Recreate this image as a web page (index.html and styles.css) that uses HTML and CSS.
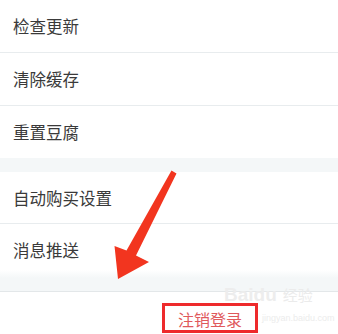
FILE: index.html
```html
<!DOCTYPE html>
<html lang="zh-CN">
<head>
<meta charset="utf-8">
<title>设置</title>
<link rel="stylesheet" href="styles.css">
</head>
<body>
<div class="page">
  <div class="group">
    <div class="row row-first">检查更新</div>
    <div class="row row-mid">清除缓存</div>
    <div class="row row-last">重置豆腐</div>
  </div>
  <div class="gap"></div>
  <div class="group">
    <div class="row row-first row-short">自动购买设置</div>
    <div class="row row-push">消息推送</div>
  </div>
  <div class="footer">
    <span class="logout">注销登录</span>
    <div class="watermark">
      <div class="wm-line"><span class="wm-brand">Baidu</span><span class="wm-cn">经验</span></div>
    </div>
    <div class="wm-url">jingyan.baidu.com</div>
  </div>
  <svg class="arrow" width="338" height="334" viewBox="0 0 338 334">
    <polygon fill="#f2351f" points="171.5,170.5 176.5,173.5 136,255.5 149,262 118,279 114.5,246 126.5,250.5"/>
  </svg>
</div>
</body>
</html>
```
FILE: styles.css
```css
html, body {
  margin: 0;
  padding: 0;
  background: #ffffff;
}
.page {
  position: relative;
  width: 338px;
  height: 334px;
  overflow: hidden;
  font-family: "Noto Sans CJK SC", "Noto Sans", sans-serif;
}
.group {
  display: flex;
  flex-direction: column;
  background: #ffffff;
}
.row {
  display: flex;
  align-items: center;
  padding-left: 13px;
  font-size: 16.5px;
  color: #3a3a3a;
  height: 52px;
  box-sizing: border-box;
}
.row-first {
  height: 53px;
  border-bottom: 1px solid #e8ecee;
}
.row-mid {
  height: 53px;
  border-bottom: 1px solid #e8ecee;
}
.row-last {
  height: 52px;
}
.row-short {
  height: 52px;
}
.gap {
  height: 14px;
  background: #f4f7f8;
}
.row-push {
  height: 68px;
  padding-bottom: 16px;
  border-bottom: 1px solid #e3e7e9;
  background: linear-gradient(to bottom, #ffffff 0, #ffffff 46px, #f4f7f8 54px, #f4f7f8 100%);
}
.footer {
  position: relative;
  display: flex;
  padding-top: 11px;
  padding-left: 162px;
}
.logout {
  display: inline-block;
  border: 3px solid #ee2a2c;
  padding: 3px 13px 1px 13px;
  line-height: 20px;
  font-size: 16px;
  color: #e0595c;
}
.watermark {
  position: absolute;
  left: 224px;
  top: -5px;
  line-height: 1;
}
.wm-line {
  display: flex;
  align-items: flex-end;
  gap: 6px;
}
.wm-brand {
  font-family: "Liberation Sans", sans-serif;
  font-weight: bold;
  font-size: 19px;
  line-height: 16px;
  color: #ededed;
}
.wm-cn {
  font-size: 15px;
  line-height: 16px;
  color: #ebebeb;
}
.wm-url {
  position: absolute;
  left: 262px;
  top: 21px;
  font-family: "Liberation Sans", sans-serif;
  font-size: 9px;
  line-height: 10px;
  color: #ececec;
}
.arrow {
  position: absolute;
  left: 0;
  top: 0;
  pointer-events: none;
}
```
